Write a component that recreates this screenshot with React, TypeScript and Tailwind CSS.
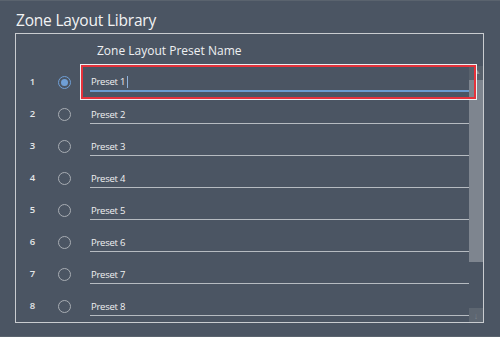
import React from "react";

const presets = [1, 2, 3, 4, 5, 6, 7, 8];

function Radio({ checked }: { checked: boolean }) {
  if (checked) {
    return (
      <span className="flex h-[13px] w-[13px] items-center justify-center rounded-full border-[1.5px] border-[#6f9fd6]">
        <span className="h-[7px] w-[7px] rounded-full bg-[#6f9fd6]" />
      </span>
    );
  }
  return <span className="block h-[13px] w-[13px] rounded-full border-[1.5px] border-[#a8adb3]" />;
}

export default function App() {
  return (
    <div
      className="h-[337px] w-[500px] overflow-hidden border-t border-b border-[#5a636e] bg-[#4b5563] text-[#eef0f2]"
      style={{ fontFamily: '"Open Sans", "Noto Sans", sans-serif' }}
    >
      <div className="ml-[16px] mt-[6px] h-[26px] text-[15.5px] leading-[26px] tracking-[-0.2px] text-[#f2f3f4]">
        Zone Layout Library
      </div>
      <div className="ml-[15px] w-[469px] border border-[#c9ccd0]">
        <div className="flex h-[32px] items-center pl-[81px] pt-[1px] text-[12px] text-[#eef0f2]">
          Zone Layout Preset Name
        </div>
        <div className="flex">
          <div className="flex-1">
            {presets.map((n) => (
              <div key={n} className="relative flex h-[32px] items-center">
                <div className="w-[33px] text-center text-[9.5px] font-semibold text-[#e4e6e8]">{n}</div>
                <div className="flex w-[31px] justify-center">
                  <Radio checked={n === 1} />
                </div>
                <div className="relative h-full flex-1 pl-[10px]">
                  <div
                    className={
                      "flex h-[26px] items-end pb-[4px] pl-[1px] text-[9.5px] font-medium leading-none tracking-[-0.25px] text-[#f0f1f2] " +
                      (n === 1 ? "border-b-2 border-[#6b9bd0]" : "border-b border-[#b6bbc1]")
                    }
                  >
                    <span>Preset {n}</span>
                    {n === 1 && <span className="ml-[2px] mb-[-2px] inline-block h-[12px] w-px bg-[#8fb3dd]" />}
                  </div>
                  {n === 1 && (
                    <div className="absolute left-0 right-[-8px] top-[-2px] bottom-[-2px] border border-[#eceef0]">
                      <div className="h-full w-full border-2 border-[#e5323b]" />
                    </div>
                  )}
                </div>
              </div>
            ))}
          </div>
          <div className="flex w-[14px] flex-col">
            <div className="flex h-[14px] items-start justify-end bg-[#58616c] pr-[2px] pt-[2px] text-[7px] leading-none text-[#8a919a]">
              ▲
            </div>
            <div className="h-[182px] bg-[#7e858f]" />
            <div className="flex-1" />
            <div className="flex h-[14px] items-center justify-center bg-[#5d6671] text-[9px] leading-none text-[#7b838d]">
              ↓
            </div>
          </div>
        </div>
      </div>
    </div>
  );
}
